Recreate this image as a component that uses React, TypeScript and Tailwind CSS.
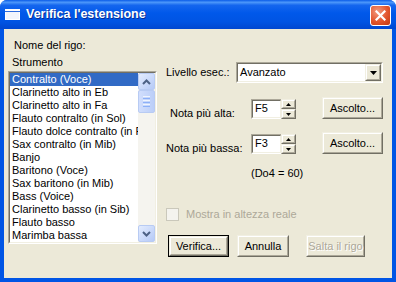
import type { ReactNode } from "react";

const instruments = [
  "Contralto (Voce)",
  "Clarinetto alto in Eb",
  "Clarinetto alto in Fa",
  "Flauto contralto (in Sol)",
  "Flauto dolce contralto (in Fa)",
  "Sax contralto (in Mib)",
  "Banjo",
  "Baritono (Voce)",
  "Sax baritono (in Mib)",
  "Bass (Voice)",
  "Clarinetto basso (in Sib)",
  "Flauto basso",
  "Marimba bassa",
];

const Sunken = ({ className = "", children }: { className?: string; children?: ReactNode }) => (
  <div className={`border border-t-[#ACA899] border-l-[#ACA899] border-b-white border-r-white ${className}`}>
    <div className="h-full w-full border border-t-[#716F64] border-l-[#716F64] border-b-[#F1EFE2] border-r-[#F1EFE2] bg-white">
      {children}
    </div>
  </div>
);

const Raised = ({ className = "", children }: { className?: string; children?: ReactNode }) => (
  <div className={`border border-t-[#F1EFE2] border-l-[#F1EFE2] border-b-[#716F64] border-r-[#716F64] ${className}`}>
    <div className="h-full w-full border border-t-white border-l-white border-b-[#ACA899] border-r-[#ACA899] bg-[#ECE9D8] flex items-center justify-center">
      {children}
    </div>
  </div>
);

const Button = ({ label, w, isDefault, disabled }: { label: string; w: string; isDefault?: boolean; disabled?: boolean }) => {
  const inner = (
    <Raised className="h-full w-full">
      <span className={disabled ? "text-[#ACA899] [text-shadow:1px_1px_0_#fff]" : "text-black"}>{label}</span>
    </Raised>
  );
  return (
    <div className={`${w} h-[22px]`}>
      {isDefault ? <div className="h-full w-full border border-black">{inner}</div> : inner}
    </div>
  );
};

const ScrollBtn = ({ up }: { up?: boolean }) => (
  <div className="h-[17px] w-[17px] rounded-[2px] border border-[#B8CBF3] bg-gradient-to-br from-[#E3ECFE] to-[#B6CAF7] flex items-center justify-center">
    <svg width="9" height="6" viewBox="0 0 9 6">
      <path d={up ? "M1 5 L4.5 1.5 L8 5" : "M1 1 L4.5 4.5 L8 1"} stroke="#4D6185" strokeWidth="2" fill="none" />
    </svg>
  </div>
);

const SpinBox = ({ value }: { value: string }) => (
  <div className="flex h-[20px]">
    <Sunken className="w-[31px] h-full">
      <div className="pl-[2px] pt-[1px] leading-[13px]">{value}</div>
    </Sunken>
    <div className="flex flex-col w-[15px] h-full ml-[-1px]">
      <Raised className="h-[10px]">
        <svg width="5" height="3" viewBox="0 0 5 3">
          <path d="M2.5 0 L5 3 L0 3 Z" fill="#000" />
        </svg>
      </Raised>
      <Raised className="h-[10px]">
        <svg width="5" height="3" viewBox="0 0 5 3">
          <path d="M0 0 L5 0 L2.5 3 Z" fill="#000" />
        </svg>
      </Raised>
    </div>
  </div>
);

export default function App() {
  return (
    <div className="w-[396px] h-[282px] bg-white font-['Liberation_Sans',Arial,sans-serif] text-[11px] text-black">
      <div className="w-full h-full flex flex-col rounded-t-[7px] overflow-hidden bg-[#0055E5]">
        {/* Title bar */}
        <div className="h-[29px] flex items-center bg-[linear-gradient(to_bottom,#0A5CE8_0%,#4C97FA_8%,#1566EE_18%,#0058EA_45%,#0054E3_75%,#0047D0_100%)]">
          <svg className="ml-[5px]" width="15" height="11" viewBox="0 0 15 11">
            <rect x="0" y="0" width="15" height="11" fill="#fff" />
            <rect x="1" y="3" width="13" height="7" fill="#F2F5FC" />
            <rect x="0" y="2" width="15" height="1" fill="#2C6BDD" />
          </svg>
          <div className="ml-[6px] text-[12.5px] font-bold text-white [text-shadow:1px_1px_0_#0A2F96]">Verifica l'estensione</div>
          <div className="ml-auto mr-[5px] mt-[1px] h-[21px] w-[21px] rounded-[3px] border border-white bg-[radial-gradient(circle_at_35%_30%,#F29A7E,#E2552D_55%,#C2380F)] flex items-center justify-center">
            <svg width="11" height="11" viewBox="0 0 11 11">
              <path d="M1.5 1.5 L9.5 9.5 M9.5 1.5 L1.5 9.5" stroke="#fff" strokeWidth="2.2" strokeLinecap="square" />
            </svg>
          </div>
        </div>

        {/* Body */}
        <div className="mx-[4px] h-[249px] bg-[#ECE9D8] flex">
          {/* Left column */}
          <div className="ml-[4px] w-[149px] flex flex-col">
            <div className="mt-[10px] pl-[6px] h-[13px] leading-[13px]">Nome del rigo:</div>
            <div className="mt-[4px] pl-[4px] h-[13px] leading-[13px]">Strumento</div>
            <Sunken className="mt-[2px] h-[173px]">
              <div className="flex h-full">
                <div className="flex-1 overflow-hidden">
                  {instruments.map((name, i) => (
                    <div
                      key={name}
                      className={`h-[13px] leading-[13px] pl-[2px] whitespace-nowrap ${i === 0 ? "bg-[#316AC5] text-white" : ""}`}
                    >
                      {name}
                    </div>
                  ))}
                </div>
                <div className="w-[17px] h-full bg-[#F5F4EF] flex flex-col">
                  <ScrollBtn up />
                  <div className="h-[23px] w-[17px] rounded-[2px] border border-[#B8CBF3] bg-gradient-to-r from-[#D1DEFD] to-[#BBCEF8] flex flex-col items-center justify-center gap-[1px]">
                    <div className="h-[1px] w-[7px] bg-[#EEF4FE]" />
                    <div className="h-[1px] w-[7px] bg-[#8CB0F8]" />
                    <div className="h-[1px] w-[7px] bg-[#EEF4FE]" />
                    <div className="h-[1px] w-[7px] bg-[#8CB0F8]" />
                    <div className="h-[1px] w-[7px] bg-[#EEF4FE]" />
                    <div className="h-[1px] w-[7px] bg-[#8CB0F8]" />
                  </div>
                  <div className="flex-1" />
                  <ScrollBtn />
                </div>
              </div>
            </Sunken>
          </div>

          {/* Right column */}
          <div className="ml-[9px] w-[217px] flex flex-col pt-[33px]">
            <div className="flex items-center h-[21px]">
              <div className="w-[70px]">Livello esec.:</div>
              <Sunken className="w-[147px] h-full">
                <div className="flex h-full">
                  <div className="flex-1 pl-[2px] flex items-center">Avanzato</div>
                  <Raised className="w-[16px] h-full">
                    <svg width="7" height="4" viewBox="0 0 7 4">
                      <path d="M0 0 L7 0 L3.5 4 Z" fill="#000" />
                    </svg>
                  </Raised>
                </div>
              </Sunken>
            </div>

            <div className="flex items-end h-[20px] mt-[16px]">
              <div className="w-[85px] pl-[4px] leading-[13px] mb-[-1px]">Nota più alta:</div>
              <SpinBox value="F5" />
              <div className="ml-auto">
                <Button label="Ascolto..." w="w-[61px]" />
              </div>
            </div>

            <div className="flex items-end h-[20px] mt-[15px]">
              <div className="w-[85px] leading-[13px] mb-[-1px]">Nota più bassa:</div>
              <SpinBox value="F3" />
              <div className="ml-auto">
                <Button label="Ascolto..." w="w-[61px]" />
              </div>
            </div>

            <div className="ml-[85px] mt-[13px] h-[13px] leading-[13px]">(Do4 = 60)</div>

            <div className="flex items-center mt-[28px] h-[13px]">
              <div className="w-[13px] h-[13px] border border-[#CAC8BB] bg-[#F4F3EE]" />
              <div className="ml-[7px] text-[#ACA899] leading-[13px]">Mostra in altezza reale</div>
            </div>

            <div className="flex mt-[14px] ml-[2px]">
              <Button label="Verifica..." w="w-[61px]" isDefault />
              <div className="ml-[8px]">
                <Button label="Annulla" w="w-[52px]" />
              </div>
              <div className="ml-[17px]">
                <Button label="Salta il rigo" w="w-[59px]" disabled />
              </div>
            </div>
          </div>
        </div>
      </div>
    </div>
  );
}
